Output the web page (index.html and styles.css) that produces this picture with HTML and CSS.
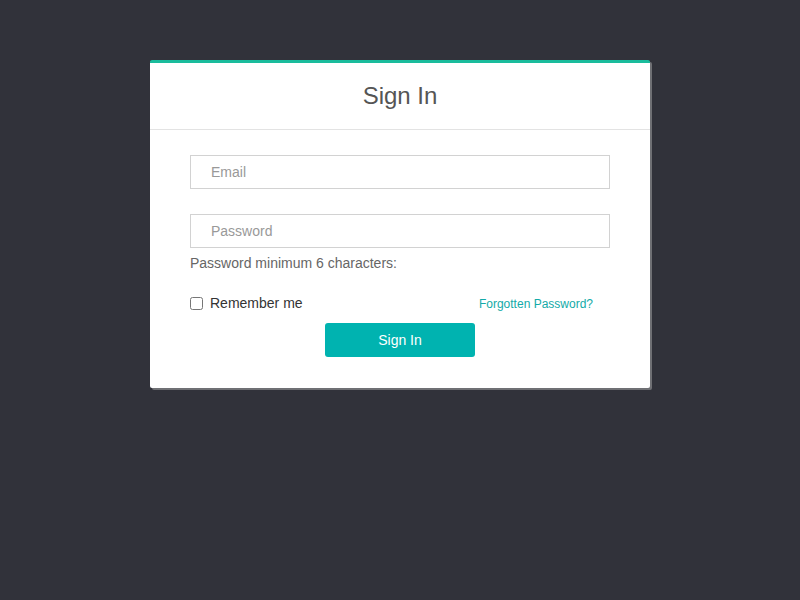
FILE: index.html
```html
<!DOCTYPE html>
<html>
<head>
<meta charset="utf-8">
<title>Sign In</title>
<link rel="stylesheet" href="styles.css">
</head>
<body>
<div class="card">
  <div class="card-header"><h1 class="title">Sign In</h1></div>
  <form class="card-body">
    <input class="field" type="text" placeholder="Email">
    <input class="field field-pass" type="password" placeholder="Password">
    <div class="hint">Password minimum 6 characters:</div>
    <div class="row">
      <label class="remember"><input type="checkbox" class="check"> Remember me</label>
      <a class="forgot" href="#">Forgotten Password?</a>
    </div>
    <div class="actions"><button type="button" class="btn">Sign In</button></div>
  </form>
</div>
</body>
</html>
```
FILE: styles.css
```css
html, body {
  margin: 0;
  padding: 0;
  background: #31323a;
  font-family: "Liberation Sans", Arial, sans-serif;
}
body {
  padding-top: 60px;
  height: 540px;
}
.card {
  width: 500px;
  margin: 0 auto;
  background: #fff;
  border-top: 3px solid #1abc9c;
  border-radius: 2px;
  box-shadow: 2px 2px 0 #6f7074;
}
.card-header {
  height: 66px;
  border-bottom: 1px solid #e3e3e3;
  display: flex;
  align-items: center;
  justify-content: center;
}
.title {
  margin: 0;
  font-size: 24px;
  font-weight: normal;
  color: #555;
  line-height: 1;
}
.card-body {
  padding: 25px 40px 31px;
  display: flex;
  flex-direction: column;
}
.field {
  box-sizing: border-box;
  width: 420px;
  height: 34px;
  border: 1px solid #d2d2d2;
  padding: 0 20px;
  font-family: "Liberation Sans", Arial, sans-serif;
  font-size: 14px;
  color: #555;
  outline: none;
  margin: 0;
}
.field::placeholder {
  color: #999;
}
.field-pass {
  margin-top: 25px;
}
.hint {
  margin-top: 6px;
  font-size: 14px;
  line-height: 18px;
  color: #666;
}
.row {
  margin-top: 22px;
  display: flex;
  align-items: center;
  justify-content: space-between;
  height: 18px;
}
.remember {
  display: flex;
  align-items: center;
  font-size: 14px;
  color: #333;
}
.check {
  margin: 0 7px 0 0;
  width: 13px;
  height: 13px;
}
.forgot {
  font-size: 12px;
  color: #13aaa8;
  text-decoration: none;
  margin-right: 17px;
  position: relative;
  top: 1px;
}
.actions {
  margin-top: 11px;
  display: flex;
  justify-content: center;
}
.btn {
  width: 150px;
  height: 34px;
  border: none;
  border-radius: 3px;
  background: #00b3b0;
  color: #fff;
  font-family: "Liberation Sans", Arial, sans-serif;
  font-size: 14px;
  padding: 0;
}
```
